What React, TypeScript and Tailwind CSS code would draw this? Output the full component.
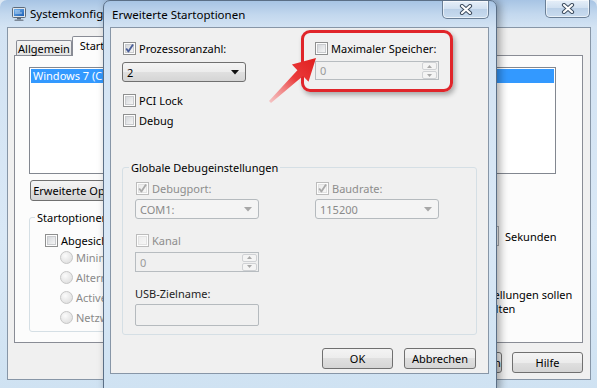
import { useId } from "react";
import clsx from "clsx";

const glass =
  "bg-[linear-gradient(180deg,#a7c4e4_0px,#c3d8ee_14px,#d3e3f3_27px,#d9e8f6_60%,#cfe2f2_100%)]";
const btnFace =
  "rounded-[3px] border border-[#707070] bg-[linear-gradient(180deg,#f4f4f4_0%,#ececec_50%,#e0e0e0_50%,#d5d5d5_100%)]";

function Check({ checked = false, disabled = false }: { checked?: boolean; disabled?: boolean }) {
  const id = useId();
  return (
    <svg width="13" height="13" viewBox="0 0 13 13" className="shrink-0">
      <defs>
        <linearGradient id={id} x1="0" y1="0" x2="1" y2="1">
          <stop offset="0" stopColor={disabled ? "#ececec" : "#d3d6da"} />
          <stop offset="1" stopColor="#f7f7f7" />
        </linearGradient>
      </defs>
      <rect x="0.5" y="0.5" width="12" height="12" fill="#fdfdfd" stroke={disabled ? "#bcbcbc" : "#8e8f8f"} />
      <rect x="2.5" y="2.5" width="8" height="8" fill={`url(#${id})`} stroke={disabled ? "#e2e2e2" : "#c9cbce"} />
      {checked && (
        <path
          d="M3.2 6.4 L5.4 9.6 L10 2.4"
          fill="none"
          stroke={disabled ? "#a9a9a9" : "#4a5e99"}
          strokeWidth="1.8"
          strokeLinejoin="round"
        />
      )}
    </svg>
  );
}

function Radio() {
  const id = useId();
  return (
    <svg width="13" height="13" viewBox="0 0 13 13" className="shrink-0">
      <defs>
        <radialGradient id={id} cx="0.4" cy="0.35" r="0.7">
          <stop offset="0" stopColor="#fbfbfb" />
          <stop offset="1" stopColor="#dedede" />
        </radialGradient>
      </defs>
      <circle cx="6.5" cy="6.5" r="6" fill={`url(#${id})`} stroke="#c6c6c6" />
    </svg>
  );
}

function Arrow({ disabled = false }: { disabled?: boolean }) {
  return (
    <svg width="8" height="5" viewBox="0 0 8 5" className="shrink-0">
      <path d="M0 0 H8 L4 4.5 Z" fill={disabled ? "#a7a7a7" : "#101010"} />
    </svg>
  );
}

function Combo({ value, disabled = false }: { value: string; disabled?: boolean }) {
  return (
    <div
      className={clsx(
        "flex h-[20px] w-[124px] items-center justify-between pl-[4px] pr-[6px]",
        disabled
          ? "rounded-[3px] border border-[#b5babe] bg-[#f4f4f4] text-[#8a8a8a]"
          : clsx(btnFace, "text-black")
      )}
    >
      <span>{value}</span>
      <Arrow disabled={disabled} />
    </div>
  );
}

function SpinBtn({ up }: { up?: boolean }) {
  return (
    <div className="flex h-[8px] w-[15px] items-center justify-center rounded-[2px] border border-[#cfd1d4] bg-[#f4f4f4]">
      <svg width="5" height="3" viewBox="0 0 5 3">
        <path d={up ? "M0 3 H5 L2.5 0 Z" : "M0 0 H5 L2.5 3 Z"} fill="#a9a9a9" />
      </svg>
    </div>
  );
}

function Spin({ short = false }: { short?: boolean }) {
  return (
    <div
      className={clsx(
        "flex w-[124px] items-stretch border border-[#b7bcc0] bg-[#f0f0f0] text-[#9a9a9a]",
        short ? "h-[19px]" : "h-[20px]"
      )}
    >
      <span className="flex flex-1 items-center pl-[4px]">0</span>
      <div className="flex flex-col justify-center gap-[1px] pr-[1px]">
        <SpinBtn up />
        <SpinBtn />
      </div>
    </div>
  );
}

function Button({ label, w = "w-[71px]" }: { label: string; w?: string }) {
  return (
    <div className={clsx("flex h-[21px] items-center justify-center whitespace-nowrap text-black", btnFace, w)}>
      {label}
    </div>
  );
}

function CloseBtn({ w }: { w: string }) {
  return (
    <div
      className={clsx(
        "flex h-[18px] items-center justify-center self-start rounded-b-[5px] border border-t-0 border-[#6a7f96] bg-[linear-gradient(180deg,#e6eff9_0%,#cfdff0_50%,#bcd1e8_50%,#c9dcef_100%)] shadow-[inset_0_0_0_1px_rgba(255,255,255,0.6)]",
        w
      )}
    >
      <svg width="14" height="11" viewBox="0 0 14 11">
        <path d="M3 2 L11 9 M11 2 L3 9" stroke="#3e4e61" strokeWidth="4.2" strokeLinecap="round" />
        <path d="M3 2 L11 9 M11 2 L3 9" stroke="#ffffff" strokeWidth="2.2" strokeLinecap="round" />
      </svg>
    </div>
  );
}

function MsconfigIcon() {
  return (
    <svg width="16" height="16" viewBox="0 0 16 16" className="shrink-0">
      <defs>
        <linearGradient id="scr" x1="0" y1="0" x2="1" y2="1">
          <stop offset="0" stopColor="#6fb2f0" />
          <stop offset="1" stopColor="#1d5fb5" />
        </linearGradient>
      </defs>
      <rect x="1.5" y="1.5" width="13" height="10" rx="1" fill="#dfe4ea" stroke="#5d6b7b" />
      <rect x="3" y="3" width="10" height="7" fill="url(#scr)" />
      <path d="M4 5 L9 5 M4 7 L11 7" stroke="#ffffff" strokeWidth="0.8" opacity="0.8" />
      <rect x="6" y="12" width="4" height="1.5" fill="#5d6b7b" />
      <rect x="3.5" y="13.5" width="9" height="1.5" rx="0.5" fill="#7c8897" />
    </svg>
  );
}

function BackgroundWindow() {
  return (
    <div className={clsx("absolute left-0 top-0 z-0 flex h-[392px] w-[597px] flex-col rounded-t-[7px]", glass)}>
      <div className="flex h-[27px] shrink-0 items-center pl-[11px] pr-[7px]">
        <MsconfigIcon />
        <span className="ml-[3px] flex-1 text-[11.5px] text-black">Systemkonfiguration</span>
        <CloseBtn w="w-[45px]" />
      </div>
      <div className="ml-[7px] mr-[6px] flex h-[353px] flex-col border border-[#8796a7] bg-[#f0f0f0]">
        <div className="relative z-10 ml-[8px] mt-[8px] flex h-[20px] items-end">
          <div className="mb-[1px] flex h-[15px] w-[56px] items-center justify-center rounded-t-[2px] border border-b-0 border-[#898c95] bg-[linear-gradient(180deg,#f4f4f4,#e3e3e3)]">
            Allgemein
          </div>
          <div className="flex h-[20px] w-[40px] items-center justify-center rounded-t-[2px] border border-b-0 border-[#898c95] bg-[#fcfcfc] pb-[2px]">
            Start
          </div>
          <div className="mb-[1px] flex h-[15px] w-[50px] items-center justify-center border border-b-0 border-l-0 border-[#898c95] bg-[#ececec]">
            Dienste
          </div>
        </div>
        <div className="-mt-px ml-[6px] flex h-[288px] w-[569px] flex-col border border-[#898c95] bg-[#fcfcfc]">
          <div className="ml-[14px] mt-[11px] h-[107px] w-[527px] border border-[#828790] bg-white p-[1px]">
            <div className="h-[14px] whitespace-nowrap bg-[#3399ff] pl-[2px] leading-[14px] text-white">
              Windows 7 (C:\Windows) : Aktuelles Betriebssystem; Standardbetriebssystem
            </div>
          </div>
          <div className="ml-[15px] mt-[6px]">
            <Button label="Erweiterte Optionen..." w="w-[120px]" />
          </div>
          <div className="mt-[9px] flex">
            <fieldset className="ml-[14px] h-[122px] w-[272px] rounded-[3px] border border-[#d5dfe5]">
              <legend className="ml-[5px] px-[2px] leading-[15px]">Startoptionen</legend>
              <div className="flex flex-col pl-[15px] pt-[9px]">
                <div className="flex h-[13px] items-center gap-[3px] whitespace-nowrap">
                  <Check />
                  <span>Abgesicherter Start</span>
                </div>
                {["Minimal", "Alternative Shell", "Active Directory-Reparatur", "Netzwerk"].map((r) => (
                  <div key={r} className="flex h-[20px] items-center gap-[3px] whitespace-nowrap pl-[15px] text-[#8a8a8a]">
                    <Radio />
                    <span>{r}</span>
                  </div>
                ))}
              </div>
            </fieldset>
            <div className="ml-[106px] flex flex-col">
              <span className="h-[15px] leading-[15px]">Timeout:</span>
              <div className="mt-[1px] flex items-center">
                <div className="ml-[48px] flex h-[20px] w-[47px] items-center border border-[#abadb3] bg-white pl-[4px]">
                  30
                </div>
                <span className="ml-[6px]">Sekunden</span>
              </div>
              <div className="mt-[42px] flex items-start gap-[5px]">
                <Check />
                <span className="w-[160px] leading-[14px]">Alle Starteinstellungen sollen permanent gelten</span>
              </div>
            </div>
          </div>
        </div>
        <div className="mr-[7px] mt-[9px] flex justify-end gap-[10px]">
          <Button label="OK" />
          <Button label="Abbrechen" />
          <Button label="Übernehmen" />
          <Button label="Hilfe" />
        </div>
      </div>
    </div>
  );
}

function CheckRow({
  label,
  checked,
  disabled,
}: {
  label: string;
  checked?: boolean;
  disabled?: boolean;
}) {
  return (
    <div
      className={clsx(
        "flex h-[13px] items-center gap-[3px] whitespace-nowrap pl-[1px] leading-[13px]",
        disabled && "text-[#8d8d8d]"
      )}
    >
      <Check checked={checked} disabled={disabled} />
      <span>{label}</span>
    </div>
  );
}

function StartOptionsDialog() {
  return (
    <div
      className={clsx(
        "absolute left-[103px] top-0 z-10 flex h-[392px] w-[394px] flex-col rounded-t-[7px] border border-[#5b6f86] shadow-[3px_0_9px_rgba(0,0,0,0.35)]",
        glass
      )}
    >
      <div className="flex h-[26px] shrink-0 items-center pl-[8px] pr-[7px]">
        <span className="flex-1 text-[11.5px] text-black">Erweiterte Startoptionen</span>
        <CloseBtn w="w-[47px]" />
      </div>
      <div className="ml-[6px] mr-[7px] flex h-[347px] flex-col border border-[#8796a7] bg-[#f0f0f0]">
        <div className="flex pl-[11px] pt-[14px]">
          <div className="flex w-[124px] flex-col">
            <CheckRow label="Prozessoranzahl:" checked />
            <div className="mt-[7px]">
              <Combo value="2" />
            </div>
            <div className="mt-[12px]">
              <CheckRow label="PCI Lock" />
            </div>
            <div className="mt-[7px]">
              <CheckRow label="Debug" />
            </div>
          </div>
          <div className="ml-[69px] flex w-[124px] flex-col">
            <div className="-ml-px">
              <CheckRow label="Maximaler Speicher:" />
            </div>
            <div className="mt-[6px]">
              <Spin short />
            </div>
          </div>
        </div>
        <fieldset className="ml-[11px] mt-[33px] h-[175px] w-[355px] rounded-[3px] border border-[#d5dfe5]">
          <legend className="ml-[6px] px-[2px] leading-[15px]">Globale Debugeinstellungen</legend>
          <div className="flex flex-col pl-[12px] pt-[7px]">
            <div className="flex">
              <div className="flex w-[124px] flex-col">
                <CheckRow label="Debugport:" checked disabled />
                <div className="mt-[4px]">
                  <Combo value="COM1:" disabled />
                </div>
              </div>
              <div className="ml-[56px] flex w-[124px] flex-col">
                <CheckRow label="Baudrate:" checked disabled />
                <div className="mt-[4px]">
                  <Combo value="115200" disabled />
                </div>
              </div>
            </div>
            <div className="mt-[15px]">
              <CheckRow label="Kanal" disabled />
            </div>
            <div className="mt-[5px]">
              <Spin />
            </div>
            <span className="mt-[14px] leading-[15px] text-[#1e1e1e]">USB-Zielname:</span>
            <div className="mt-[3px] h-[22px] w-[124px] rounded-[2px] border border-[#b5babe] bg-[#f0f0f0]" />
          </div>
        </fieldset>
        <div className="mt-[13px] flex justify-end gap-[11px] pr-[12px]">
          <Button label="OK" />
          <Button label="Abbrechen" w="w-[72px]" />
        </div>
      </div>
    </div>
  );
}

function Callout() {
  return (
    <>
      <div className="absolute left-[301px] top-[30px] z-20 h-[62px] w-[152px] rounded-[9px] border-[3px] border-[#e0252a] shadow-[2px_3px_5px_rgba(0,0,0,0.3)]" />
      <svg className="absolute left-[262px] top-[50px] z-20" width="60" height="60" viewBox="0 0 60 60">
        <defs>
          <linearGradient id="arrowFill" x1="0" y1="1" x2="1" y2="0">
            <stop offset="0" stopColor="#f7a9a9" stopOpacity="0.6" />
            <stop offset="0.55" stopColor="#ea3b3b" />
            <stop offset="1" stopColor="#e01e1e" />
          </linearGradient>
        </defs>
        <polygon points="54,8 46.5,31.8 41,26.1 9,53.1 7,50.9 35.4,20.3 29.9,14.6" fill="url(#arrowFill)" />
      </svg>
    </>
  );
}

export default function App() {
  return (
    <div className="relative h-[388px] w-[597px] overflow-hidden bg-[#dde8f3] font-['Segoe_UI','Noto_Sans',sans-serif] text-[11px] leading-[15px] text-black">
      <BackgroundWindow />
      <StartOptionsDialog />
      <Callout />
    </div>
  );
}
